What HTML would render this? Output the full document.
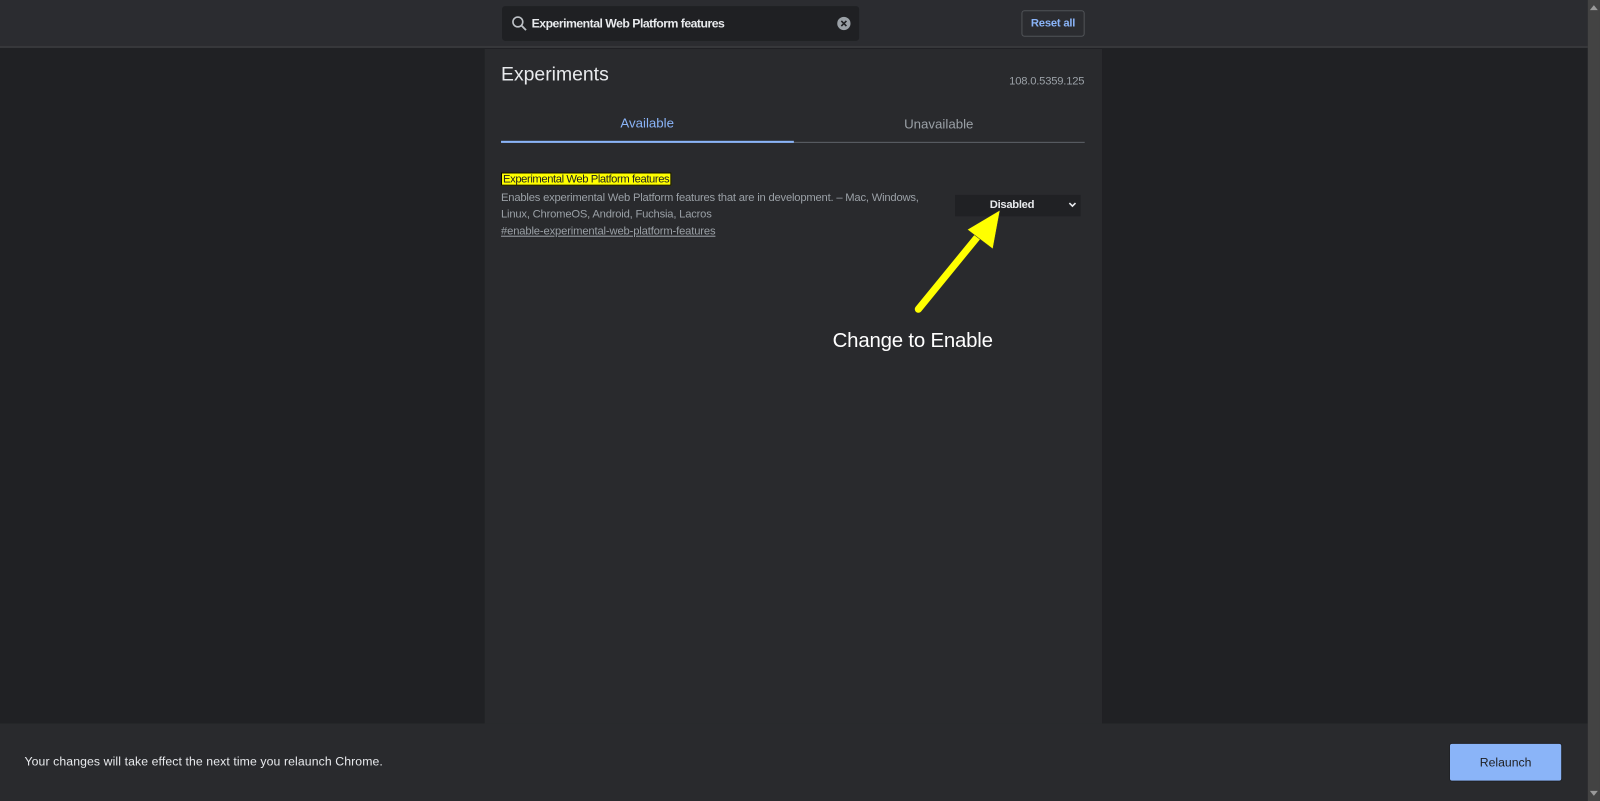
<!DOCTYPE html>
<html><head><style>
*{margin:0;padding:0;box-sizing:border-box}
body{width:1600px;height:801px;background:#202124;overflow:hidden}
.w{position:absolute;left:0;top:0;width:1568px;height:785px;transform:scale(1.0204);transform-origin:0 0;font-family:"Liberation Sans",Arial,sans-serif;color:#e8eaed}
.hdr{position:absolute;left:0;top:0;width:1556px;height:47px;background:#2b2c30;border-bottom:2px solid #37383b}
.panel{position:absolute;left:475px;top:48px;width:605px;height:661px;background:#292a2d}
.search{position:absolute;left:492px;top:6px;width:350px;height:34px;background:#1f2023;border-radius:3px}
.search .t{position:absolute;left:29px;top:10px;font-size:12px;font-weight:bold;color:#e8eaed;letter-spacing:-0.5px}
.reset{position:absolute;left:1001px;top:10px;width:62px;height:26px;border:1px solid #505357;border-radius:3px;color:#8ab4f8;font-size:11px;font-weight:bold;text-align:center;line-height:24px;letter-spacing:-0.2px}
.abs{position:absolute}
.foot{position:absolute;left:0;top:709px;width:1556px;height:76px;background:#292a2d}
.scroll{position:absolute;left:1556px;top:0;width:12px;height:785px;background:#434343}
</style></head><body><div class="w">
<div class="hdr"></div>
<div class="panel"></div>
<div class="search">
<svg class="abs" style="left:9px;top:9px" width="16" height="16" viewBox="0 0 16 16"><circle cx="6.5" cy="6.5" r="4.8" fill="none" stroke="#bdc1c6" stroke-width="1.6"/><line x1="10" y1="10" x2="14.5" y2="14.5" stroke="#bdc1c6" stroke-width="1.8"/></svg>
<div class="t">Experimental Web Platform features</div>
<svg class="abs" style="left:328px;top:10px" width="14" height="14" viewBox="0 0 14 14"><circle cx="7" cy="7" r="6.5" fill="#9aa0a6"/><path d="M4.5 4.5L9.5 9.5M9.5 4.5L4.5 9.5" stroke="#1f2023" stroke-width="1.6"/></svg>
</div>
<div class="reset">Reset all</div>
<div class="abs" style="left:491px;top:63px;font-size:19px;color:#e8eaed">Experiments</div>
<div class="abs" style="left:989px;top:74px;font-size:11px;color:#9aa0a6;letter-spacing:-0.2px">108.0.5359.125</div>
<div class="abs" style="left:608px;top:113px;font-size:13px;color:#8ab4f8">Available</div>
<div class="abs" style="left:886px;top:114px;font-size:13px;color:#9aa0a6">Unavailable</div>
<div class="abs" style="left:491px;top:139px;width:572px;height:1px;background:#5f6368"></div>
<div class="abs" style="left:491px;top:138px;width:287px;height:2px;background:#8ab4f8"></div>
<div class="abs" style="left:491px;top:169px;height:13px;padding:0 1px;background:#ffff00;color:#202124;font-size:11px;line-height:12px;border:1px solid #000;letter-spacing:-0.4px">Experimental Web Platform features</div>
<div class="abs" style="left:491px;top:186px;width:445px;font-size:11px;line-height:16px;color:#9aa0a6;letter-spacing:-0.2px">Enables experimental Web Platform features that are in development. – Mac, Windows,<br>Linux, ChromeOS, Android, Fuchsia, Lacros</div>
<div class="abs" style="left:491px;top:221px;font-size:11px;color:#9aa0a6;text-decoration:underline;letter-spacing:-0.15px">#enable-experimental-web-platform-features</div>
<div class="abs" style="left:936px;top:191px;width:123px;height:21px;background:#202124"></div>
<div class="abs" style="left:970px;top:195px;font-size:11px;font-weight:bold;color:#e8eaed;letter-spacing:-0.3px">Disabled</div>
<svg class="abs" style="left:1047px;top:198px" width="8" height="6" viewBox="0 0 8 6"><path d="M1 1L4 4L7 1" fill="none" stroke="#e8eaed" stroke-width="1.6"/></svg>
<svg class="abs" style="left:880px;top:200px" width="120" height="120" viewBox="0 0 120 120"><line x1="20" y1="103" x2="78" y2="32" stroke="#ffff00" stroke-width="7" stroke-linecap="round"/><polygon points="100,6 68,25 93,44" fill="#ffff00" stroke="#333" stroke-width="0.5"/></svg>
<div class="abs" style="left:816px;top:323px;font-size:20px;color:#fff;letter-spacing:-0.2px">Change to Enable</div>
<div class="foot"></div>
<div class="abs" style="left:24px;top:739px;font-size:12px;color:#e8eaed;letter-spacing:0.1px">Your changes will take effect the next time you relaunch Chrome.</div>
<div class="abs" style="left:1420px;top:728px;width:111px;height:38px;background:#8ab4f8;border:1px solid #202124;border-radius:3px;color:#202124;font-size:12px;text-align:center;line-height:36px">Relaunch</div>
<div class="scroll"></div>
<svg class="abs" style="left:1558px;top:5px" width="8" height="5"><polygon points="0,5 4,0 8,5" fill="#9a9a9a"/></svg>
<svg class="abs" style="left:1558px;top:775px" width="8" height="5"><polygon points="0,0 4,5 8,0" fill="#9a9a9a"/></svg>
</div></body></html>
